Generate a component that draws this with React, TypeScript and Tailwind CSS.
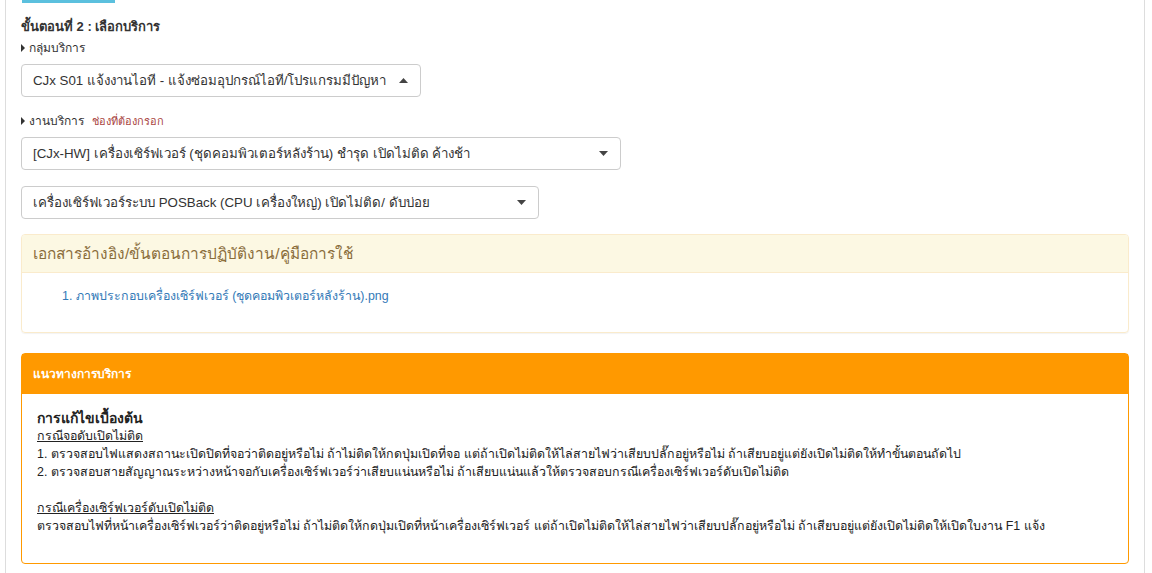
import React from "react";

function Caret({ up = false }: { up?: boolean }) {
  return (
    <svg width="9" height="5" viewBox="0 0 9 5" className="shrink-0">
      {up ? <path d="M0 5 L4.5 0 L9 5 Z" fill="#444" /> : <path d="M0 0 L4.5 5 L9 0 Z" fill="#444" />}
    </svg>
  );
}

function Tri() {
  return (
    <svg width="4" height="8" viewBox="0 0 4 8" className="shrink-0 mr-[4px]">
      <path d="M0 0 L4 4 L0 8 Z" fill="#333" />
    </svg>
  );
}

function Select({ text, width, up = false }: { text: string; width: string; up?: boolean }) {
  return (
    <div className={`${width} h-[33px] border border-[#ccc] rounded-[4px] bg-white flex items-center pl-[11px] pr-[12px] justify-between`}>
      <span className="text-[13.3px] text-[#333] whitespace-nowrap">{text}</span>
      <Caret up={up} />
    </div>
  );
}

export default function App() {
  return (
    <div className="w-[1152px] h-[573px] bg-white overflow-hidden" style={{ fontFamily: '"Liberation Sans", Tahoma, "Noto Sans", sans-serif' }}>
      <div className="ml-[5px] w-[1140px] h-full border-l border-r border-[#ddd] pl-[15px] pr-[15px] text-[#333]">
        <div className="ml-[1px] w-[93px] h-[3px] bg-[#5bc0de]" />
        <div className="mt-[16px] text-[13px] font-bold leading-[16px] text-[#333]">ขั้นตอนที่ 2 : เลือกบริการ</div>
        <div className="mt-[6px] flex items-center text-[12px] leading-[14px]">
          <Tri />
          <span>กลุ่มบริการ</span>
        </div>
        <div className="mt-[9px]">
          <Select text="CJx S01 แจ้งงานไอที - แจ้งซ่อมอุปกรณ์ไอที/โปรแกรมมีปัญหา" width="w-[400px]" up />
        </div>
        <div className="mt-[17px] flex items-center text-[12px] leading-[14px]">
          <Tri />
          <span>งานบริการ</span>
          <span className="ml-[8px] text-[11px] text-[#a94442]">ช่องที่ต้องกรอก</span>
        </div>
        <div className="mt-[9px]">
          <Select text="[CJx-HW] เครื่องเซิร์ฟเวอร์ (ชุดคอมพิวเตอร์หลังร้าน) ชำรุด เปิดไม่ติด ค้างช้า" width="w-[600px]" />
        </div>
        <div className="mt-[16px]">
          <Select text="เครื่องเซิร์ฟเวอร์ระบบ POSBack (CPU เครื่องใหญ่) เปิดไม่ติด/ ดับบ่อย" width="w-[518px]" />
        </div>
        <div className="mt-[15px] w-[1108px] border border-[#faebcc] rounded-[4px] shadow-[0_1px_1px_rgba(0,0,0,0.05)]">
          <div className="h-[38px] bg-[#fcf8e3] border-b border-[#faebcc] flex items-center px-[11px] text-[15.4px] text-[#8a6d3b] rounded-t-[3px]">
            เอกสารอ้างอิง/ขั้นตอนการปฏิบัติงาน/คู่มือการใช้
          </div>
          <div className="h-[59px] pl-[40px] pt-[15px] text-[12.4px] leading-[17px]">
            <span className="text-[#337ab7]">1. ภาพประกอบเครื่องเซิร์ฟเวอร์ (ชุดคอมพิวเตอร์หลังร้าน).png</span>
          </div>
        </div>
        <div className="mt-[20px] w-[1108px] border border-[#f90] rounded-[4px]">
          <div className="h-[40px] bg-[#f90] flex items-center px-[11px] text-[12px] font-bold text-white">แนวทางการบริการ</div>
          <div className="px-[15px] pt-[15px] pb-[28px] text-[12.4px] leading-[18px] text-[#222]">
            <div className="text-[14px] font-bold leading-[18px]">การแก้ไขเบื้องต้น</div>
            <div className="underline">กรณีจอดับเปิดไม่ติด</div>
            <div>1. ตรวจสอบไฟแสดงสถานะเปิดปิดที่จอว่าติดอยู่หรือไม่ ถ้าไม่ติดให้กดปุ่มเปิดที่จอ แต่ถ้าเปิดไม่ติดให้ไล่สายไฟว่าเสียบปลั๊กอยู่หรือไม่ ถ้าเสียบอยู่แต่ยังเปิดไม่ติดให้ทำขั้นตอนถัดไป</div>
            <div>2. ตรวจสอบสายสัญญาณระหว่างหน้าจอกับเครื่องเซิร์ฟเวอร์ว่าเสียบแน่นหรือไม่ ถ้าเสียบแน่นแล้วให้ตรวจสอบกรณีเครื่องเซิร์ฟเวอร์ดับเปิดไม่ติด</div>
            <div className="h-[18px]" />
            <div className="underline">กรณีเครื่องเซิร์ฟเวอร์ดับเปิดไม่ติด</div>
            <div>ตรวจสอบไฟที่หน้าเครื่องเซิร์ฟเวอร์ว่าติดอยู่หรือไม่ ถ้าไม่ติดให้กดปุ่มเปิดที่หน้าเครื่องเซิร์ฟเวอร์ แต่ถ้าเปิดไม่ติดให้ไล่สายไฟว่าเสียบปลั๊กอยู่หรือไม่ ถ้าเสียบอยู่แต่ยังเปิดไม่ติดให้เปิดใบงาน F1 แจ้ง</div>
          </div>
        </div>
      </div>
    </div>
  );
}
